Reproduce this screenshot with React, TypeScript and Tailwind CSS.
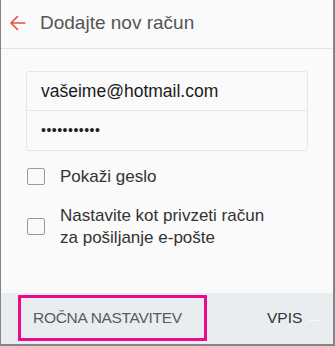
import React from "react";

export default function App() {
  const font = { fontFamily: '"Liberation Sans", Arial, sans-serif' };
  return (
    <div
      className="w-[335px] h-[346px] bg-[#fafafa] border-l border-r-2 border-b-2 border-[#858585] flex flex-col overflow-hidden"
      style={font}
    >
      <div className="h-[49px] shrink-0 border-b border-[#e2e2e2] flex items-center">
        <svg width="18" height="16" viewBox="0 0 18 16" className="ml-[8px] -mt-[3px]" fill="none">
          <path d="M16 8H2M8.5 1.5L2 8l6.5 6.5" stroke="#e5533d" strokeWidth="1.6" strokeLinecap="round" strokeLinejoin="round" />
        </svg>
        <span className="ml-[13px] -mt-[3px] text-[19px] text-[#555555] leading-none">Dodajte nov račun</span>
      </div>
      <div className="flex-1 flex flex-col">
        <div className="ml-[25px] mt-[22px] w-[282px] border border-[#e6e6e6] rounded-[3px] bg-[#fafafa]">
          <div className="h-[39px] flex items-center pl-[14px] border-b border-[#e6e6e6] text-[17.5px] text-[#1a1a1a]">
            vašeime@hotmail.com
          </div>
          <div className="h-[39px] flex items-center pl-[14px] text-[14px] text-[#222] tracking-[0.5px]">
            •••••••••••
          </div>
        </div>
        <div className="ml-[26px] mt-[13px] flex items-center">
          <div className="w-[18px] h-[17px] border border-[#9a9a9a] rounded-[2px]" />
          <span className="ml-[15px] text-[17px] text-[#333]">Pokaži geslo</span>
        </div>
        <div className="ml-[26px] mt-[15px] flex items-center">
          <div className="w-[18px] h-[17px] border border-[#9a9a9a] rounded-[2px] shrink-0" />
          <span className="ml-[15px] text-[17px] text-[#333] leading-[22px]">
            Nastavite kot privzeti račun
            <br />
            za pošiljanje e-pošte
          </span>
        </div>
      </div>
      <div className="h-[51px] shrink-0 bg-[#eaedf0] flex items-start">
        <div className="ml-[17px] mt-[2px] w-[189px] h-[46px] border-[3px] border-[#ea0a8c] flex items-center pl-[12px]">
          <span className="text-[15.5px] text-[#5a5a5a] tracking-[-0.3px] whitespace-nowrap">ROČNA NASTAVITEV</span>
        </div>
        <div className="ml-[60px] h-[50px] flex items-center">
          <span className="text-[15.5px] text-[#333]">VPIS</span>
          <div className="ml-[7px] mt-[4px] w-[9px] h-[1px] bg-[#f8f8f8]" />
        </div>
      </div>
    </div>
  );
}
